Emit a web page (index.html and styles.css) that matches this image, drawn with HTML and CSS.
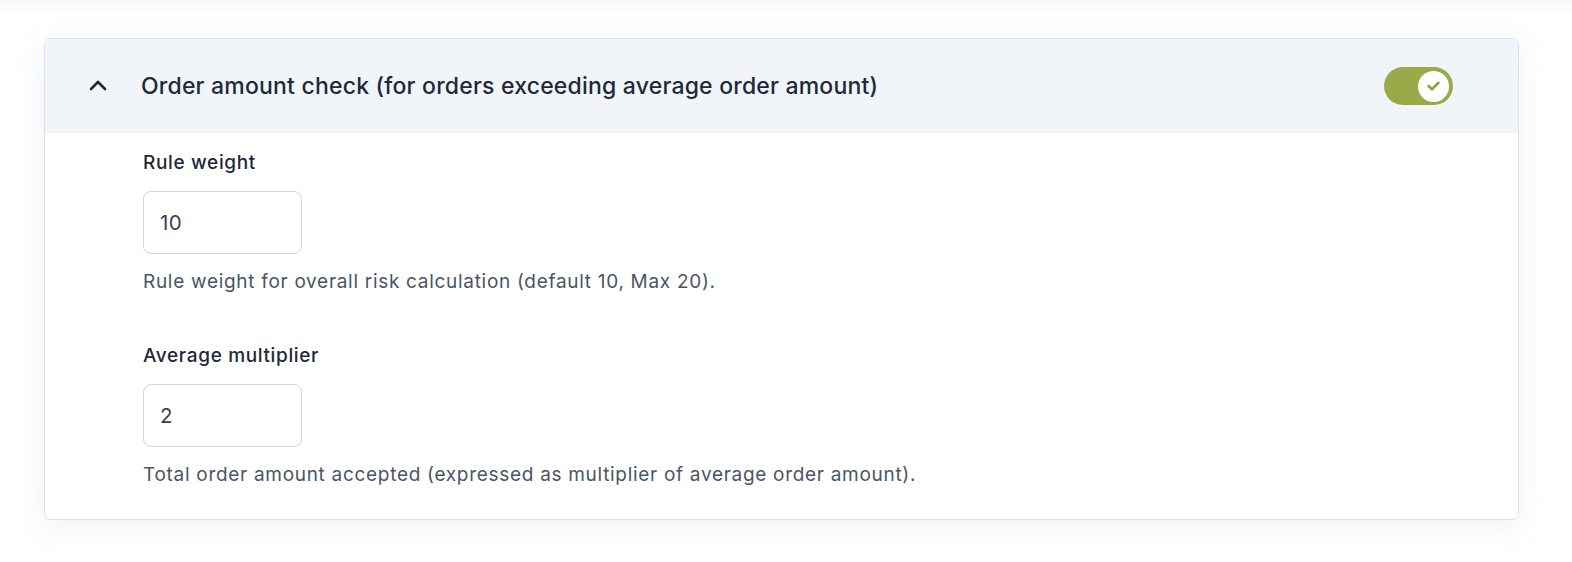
FILE: index.html
```html
<!DOCTYPE html>
<html>
<head>
<meta charset="utf-8">
<link rel="stylesheet" href="styles.css">
</head>
<body>
<div class="page">
  <div class="card">
    <div class="card-header">
      <svg class="chevron" width="18" height="12" viewBox="0 0 18 12"><path d="M2 10 L9 3 L16 10" fill="none" stroke="#1f2937" stroke-width="2.6" stroke-linecap="round" stroke-linejoin="round"/></svg>
      <div class="title">Order amount check (for orders exceeding average order amount)</div>
      <div class="toggle">
        <div class="knob">
          <svg width="15" height="12" viewBox="0 0 15 12"><path d="M2.5 6 L6 9.2 L12.5 2.8" fill="none" stroke="#8f9f3f" stroke-width="2.6" stroke-linecap="round" stroke-linejoin="round"/></svg>
        </div>
      </div>
    </div>
    <div class="card-body">
      <div class="field">
        <div class="label">Rule weight</div>
        <div class="input">10</div>
        <div class="help">Rule weight for overall risk calculation (default 10, Max 20).</div>
      </div>
      <div class="field">
        <div class="label">Average multiplier</div>
        <div class="input">2</div>
        <div class="help">Total order amount accepted (expressed as multiplier of average order amount).</div>
      </div>
    </div>
  </div>
</div>
</body>
</html>
```
FILE: styles.css
```css
* { box-sizing: border-box; }
html, body { margin: 0; padding: 0; background: #ffffff; }
body { font-family: Inter, "Noto Sans", sans-serif; color: #1f2937; }
.page { padding: 38px 53px 0 44px; background: linear-gradient(#f5f7fa 0, #ffffff 14px); height: 562px; }
.card {
  border: 1px solid #dde3ea;
  border-radius: 7px;
  background: #fff;
  box-shadow: 0 6px 30px rgba(148, 163, 184, 0.16);
  overflow: hidden;
}
.card-header {
  height: 94px;
  background: #f1f5f9;
  display: flex;
  align-items: center;
  padding: 0 65px 0 44px;
}
.chevron { flex: none; margin-right: 34px; margin-top: -2px; }
.title { flex: 1; font-size: 23px; font-weight: 500; color: #1e293b; letter-spacing: 0.2px; }
.toggle {
  width: 69px; height: 38px; border-radius: 19px; background: #9aaa48;
  display: flex; align-items: center; justify-content: flex-end; padding-right: 4px;
}
.knob {
  width: 31px; height: 31px; border-radius: 50%; background: #fff;
  display: flex; align-items: center; justify-content: center;
}
.card-body { padding: 18px 0 32px 98px; display: flex; flex-direction: column; gap: 50px; }
.field { display: flex; flex-direction: column; }
.label { font-size: 19px; font-weight: 500; color: #1f2937; line-height: 24px; letter-spacing: 0.65px; }
.input {
  margin-top: 16px;
  width: 159px; height: 63px;
  border: 1px solid #d1d5db; border-radius: 8px;
  display: flex; align-items: center; padding-left: 16px;
  font-size: 20.5px; color: #374151; letter-spacing: 0.3px;
}
.help { margin-top: 16px; font-size: 19px; color: #4b5563; line-height: 24px; letter-spacing: 0.7px; }
```
